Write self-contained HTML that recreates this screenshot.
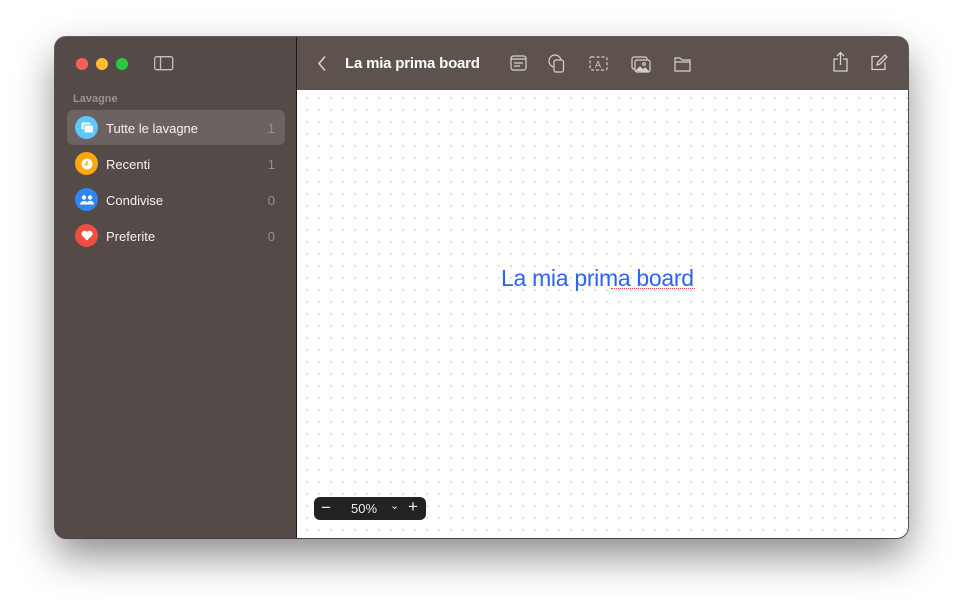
<!DOCTYPE html>
<html><head><meta charset="utf-8"><style>
*{margin:0;padding:0;box-sizing:border-box}
body{width:963px;height:612px;background:#fff;font-family:"Liberation Sans",sans-serif;position:relative;overflow:hidden}
.win{position:absolute;left:55px;top:37px;width:853px;height:501px;border-radius:11px;overflow:hidden;box-shadow:0 18px 40px rgba(0,0,0,.45),0 0 0 1px rgba(0,0,0,.6);background:#544a47}
.side{position:absolute;left:0;top:0;width:241px;height:501px;background:#544a47}
.div{position:absolute;left:241px;top:0;width:1.5px;height:501px;background:#1c1817}
.tl{position:absolute;top:21px;width:12px;height:12px;border-radius:50%}
.tb{position:absolute;left:242px;top:0;right:0;height:53px;background:#5d524e}
.canvas{position:absolute;left:242px;top:53px;right:0;bottom:0;background-color:#fff;background-image:radial-gradient(circle,#d6d6d6 0.8px,transparent 1.1px);background-size:12px 12px;background-position:4px 2px}
.sec{position:absolute;left:18px;top:56px;font-size:11px;color:#9b918e;font-weight:bold}
.row{position:absolute;left:12px;width:218px;height:35px;border-radius:6px;color:#f7f3f1;font-size:13px}
.row .ic{position:absolute;left:8px;top:6px;width:23px;height:23px;border-radius:50%}
.row .t{position:absolute;left:39px;top:11px}
.row .n{position:absolute;right:10px;top:11px;color:#9a908d}
.title{position:absolute;left:290px;top:18px;color:#fff;font-weight:bold;font-size:15px;letter-spacing:-.2px}
.zoom{position:absolute;left:259px;top:460px;width:112px;height:23px;border-radius:6px;background:#222;color:#eee;font-size:13px}
svg{position:absolute}
</style></head><body>
<div class="win">
<div class="side"></div>
<div class="tl" style="left:21px;background:#fe5f57"></div>
<div class="tl" style="left:41px;background:#febc2e"></div>
<div class="tl" style="left:61px;background:#28c840"></div>
<svg style="left:99px;top:19px" width="20" height="15" viewBox="0 0 20 15"><rect x="0.7" y="0.7" width="18" height="13" rx="2" fill="none" stroke="#c8c0bd" stroke-width="1.3"/><line x1="6.5" y1="1" x2="6.5" y2="14" stroke="#c8c0bd" stroke-width="1.3"/></svg>
<div class="sec">Lavagne</div>
<div class="row" style="top:73px;background:#6c625f"><div class="ic" style="background:#5ac8fa"></div><svg style="left:14px;top:12px" width="13" height="12"><rect x="0.5" y="0.5" width="9" height="7" rx="1" fill="#fff"/><rect x="3" y="3" width="9.5" height="8" rx="1" fill="#fff" stroke="#5ac8fa"/></svg><span class="t">Tutte le lavagne</span><span class="n">1</span></div>
<div class="row" style="top:109px"><div class="ic" style="background:#fea70a"></div><svg style="left:14px;top:12px" width="12" height="12"><circle cx="6" cy="6" r="5.5" fill="#fff"/><path d="M6 3v3.5H3.5" stroke="#fea70a" stroke-width="1.3" fill="none"/></svg><span class="t">Recenti</span><span class="n">1</span></div>
<div class="row" style="top:145px"><div class="ic" style="background:#2f86f6"></div><svg style="left:13px;top:13px" width="14" height="10"><circle cx="4" cy="2.5" r="2.2" fill="#fff"/><circle cx="10" cy="2.5" r="2.2" fill="#fff"/><path d="M0 9.5a4 3.5 0 0 1 8 0zM6.5 9.5a3.5 3.5 0 0 1 7.5 0z" fill="#fff"/></svg><span class="t">Condivise</span><span class="n">0</span></div>
<div class="row" style="top:181px"><div class="ic" style="background:#f24b3f"></div><svg style="left:14px;top:12px" width="12" height="11"><path d="M6 10.5L1 5.5A2.8 2.8 0 0 1 6 2a2.8 2.8 0 0 1 5 3.5z" fill="#fff"/></svg><span class="t">Preferite</span><span class="n">0</span></div>
<div class="div"></div>
<div class="tb"></div>
<div class="canvas"></div>
<svg style="left:262px;top:18px" width="10" height="17"><path d="M8 1.5L2 8.5l6 7" stroke="#d8d0cd" stroke-width="1.6" fill="none"/></svg>
<div class="title">La mia prima board</div>
<svg style="left:455px;top:17px" width="210" height="20" fill="none" stroke="#d8d0cd" stroke-width="1.2">
<rect x="1" y="2" width="15" height="14" rx="2.5"/><line x1="1" y1="5" x2="16" y2="5"/><line x1="4" y1="9" x2="13" y2="9"/><line x1="4" y1="12" x2="10" y2="12"/>
<circle cx="45" cy="7" r="6"/><rect x="44" y="6" width="9.5" height="12" rx="2" fill="#5d524e"/>
<rect x="80" y="3" width="17" height="13" rx="1.5" stroke-dasharray="3 2"/><text x="85" y="13.5" font-size="9" fill="#d8d0cd" stroke="none" font-family="Liberation Sans">A</text>
<rect x="122" y="3" width="15" height="12" rx="2"/><rect x="125" y="6" width="15" height="12" rx="2" fill="#5d524e"/><path d="M126 17l4-4 3 3 2-2 4 4" fill="#d8d0cd"/><circle cx="134" cy="10" r="1.3"/>
<path d="M165 4h5l2 2h8v11h-15z"/><line x1="165" y1="8" x2="180" y2="8"/>
</svg>
<svg style="left:776px;top:14px" width="20" height="22" fill="none" stroke="#d8d0cd" stroke-width="1.3"><path d="M7 8H3v12h13V8h-4M9.5 14V2M6 5l3.5-3.5L13 5"/></svg>
<svg style="left:815px;top:17px" width="18" height="18" fill="none" stroke="#d8d0cd" stroke-width="1.3"><path d="M9 2.5H2v13h13v-7M7 11l1-3 7-7 2 2-7 7z"/></svg>
<div style="position:absolute;left:446px;top:228px;font-size:23px;color:#2b64f0;letter-spacing:-.3px">La mia prima board</div>
<div style="position:absolute;left:556px;top:251px;width:84px;border-bottom:1px dotted #e44"></div>
<div class="zoom"><span style="position:absolute;left:7px;top:1px;font-size:17px">−</span><span style="position:absolute;left:37px;top:4px">50%</span><span style="position:absolute;left:76px;top:2px;font-size:11px">⌄</span><span style="position:absolute;left:94px;top:0px;font-size:17px">+</span></div>
</div>
</body></html>
